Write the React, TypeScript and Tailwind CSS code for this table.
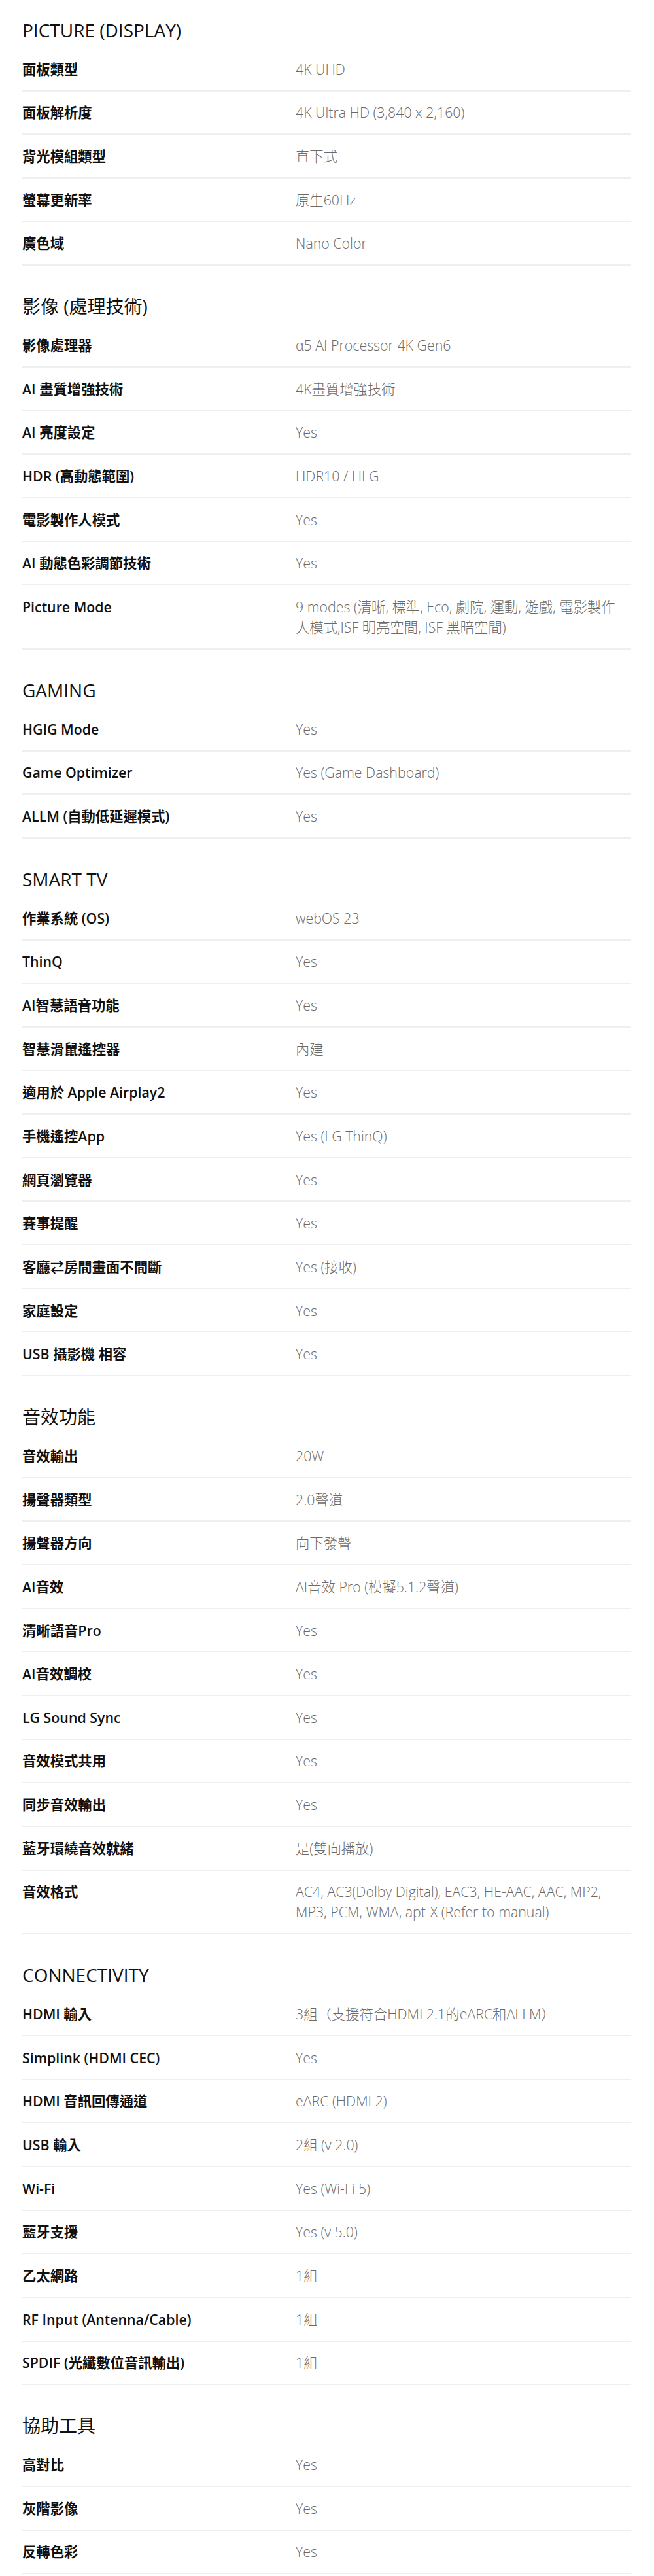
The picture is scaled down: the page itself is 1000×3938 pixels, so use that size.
const SPEC_SECTIONS = [
  {
    title: "PICTURE (DISPLAY)",
    rows: [
      ["面板類型", "4K UHD"],
      ["面板解析度", "4K Ultra HD (3,840 x 2,160)"],
      ["背光模組類型", "直下式"],
      ["螢幕更新率", "原生60Hz"],
      ["廣色域", "Nano Color"],
    ],
  },
  {
    title: "影像 (處理技術)",
    rows: [
      ["影像處理器", "α5 AI Processor 4K Gen6"],
      ["AI 畫質增強技術", "4K畫質增強技術"],
      ["AI 亮度設定", "Yes"],
      ["HDR (高動態範圍)", "HDR10 / HLG"],
      ["電影製作人模式", "Yes"],
      ["AI 動態色彩調節技術", "Yes"],
      ["Picture Mode", "9 modes (清晰, 標準, Eco, 劇院, 運動, 遊戲, 電影製作人模式,ISF 明亮空間, ISF 黑暗空間)"],
    ],
  },
  {
    title: "GAMING",
    rows: [
      ["HGIG Mode", "Yes"],
      ["Game Optimizer", "Yes (Game Dashboard)"],
      ["ALLM (自動低延遲模式)", "Yes"],
    ],
  },
  {
    title: "SMART TV",
    rows: [
      ["作業系統 (OS)", "webOS 23"],
      ["ThinQ", "Yes"],
      ["AI智慧語音功能", "Yes"],
      ["智慧滑鼠遙控器", "內建"],
      ["適用於 Apple Airplay2", "Yes"],
      ["手機遙控App", "Yes (LG ThinQ)"],
      ["網頁瀏覽器", "Yes"],
      ["賽事提醒", "Yes"],
      ["客廳⇄房間畫面不間斷", "Yes (接收)"],
      ["家庭設定", "Yes"],
      ["USB 攝影機 相容", "Yes"],
    ],
  },
  {
    title: "音效功能",
    rows: [
      ["音效輸出", "20W"],
      ["揚聲器類型", "2.0聲道"],
      ["揚聲器方向", "向下發聲"],
      ["AI音效", "AI音效 Pro (模擬5.1.2聲道)"],
      ["清晰語音Pro", "Yes"],
      ["AI音效調校", "Yes"],
      ["LG Sound Sync", "Yes"],
      ["音效模式共用", "Yes"],
      ["同步音效輸出", "Yes"],
      ["藍牙環繞音效就緒", "是(雙向播放)"],
      ["音效格式", "AC4, AC3(Dolby Digital), EAC3, HE-AAC, AAC, MP2, MP3, PCM, WMA, apt-X (Refer to manual)"],
    ],
  },
  {
    title: "CONNECTIVITY",
    rows: [
      ["HDMI 輸入", "3組（支援符合HDMI 2.1的eARC和ALLM）"],
      ["Simplink (HDMI CEC)", "Yes"],
      ["HDMI 音訊回傳通道", "eARC (HDMI 2)"],
      ["USB 輸入", "2組 (v 2.0)"],
      ["Wi-Fi", "Yes (Wi-Fi 5)"],
      ["藍牙支援", "Yes (v 5.0)"],
      ["乙太網路", "1組"],
      ["RF Input (Antenna/Cable)", "1組"],
      ["SPDIF (光纖數位音訊輸出)", "1組"],
    ],
  },
  {
    title: "協助工具",
    rows: [
      ["高對比", "Yes"],
      ["灰階影像", "Yes"],
      ["反轉色彩", "Yes"],
    ],
  },
];

function SpecRow({ label, value }: { label: string; value: string }) {
  return (
    <div className="grid grid-cols-[418px_1fr] border-b-2 border-[#efefef] py-[16.83px] text-[21.33px] leading-[31px]">
      <div className="font-semibold text-[#111111]">{label}</div>
      <div className="pr-[18px] font-light text-[#6b6b6b]">{value}</div>
    </div>
  );
}

export default function App() {
  return (
    <div className="min-h-screen bg-white pl-[34px] pr-[35px] pb-[10px] font-['Open_Sans','Noto_Sans_CJK_TC',sans-serif]">
      {SPEC_SECTIONS.map((section) => (
        <section key={section.title} className="mt-4 first:mt-0">
          <h2 className="pt-[29px] pb-[10px] text-[28px] leading-[34px] font-normal text-[#111111]">
            {section.title}
          </h2>
          {section.rows.map(([label, value]) => (
            <SpecRow key={label} label={label} value={value} />
          ))}
        </section>
      ))}
    </div>
  );
}
